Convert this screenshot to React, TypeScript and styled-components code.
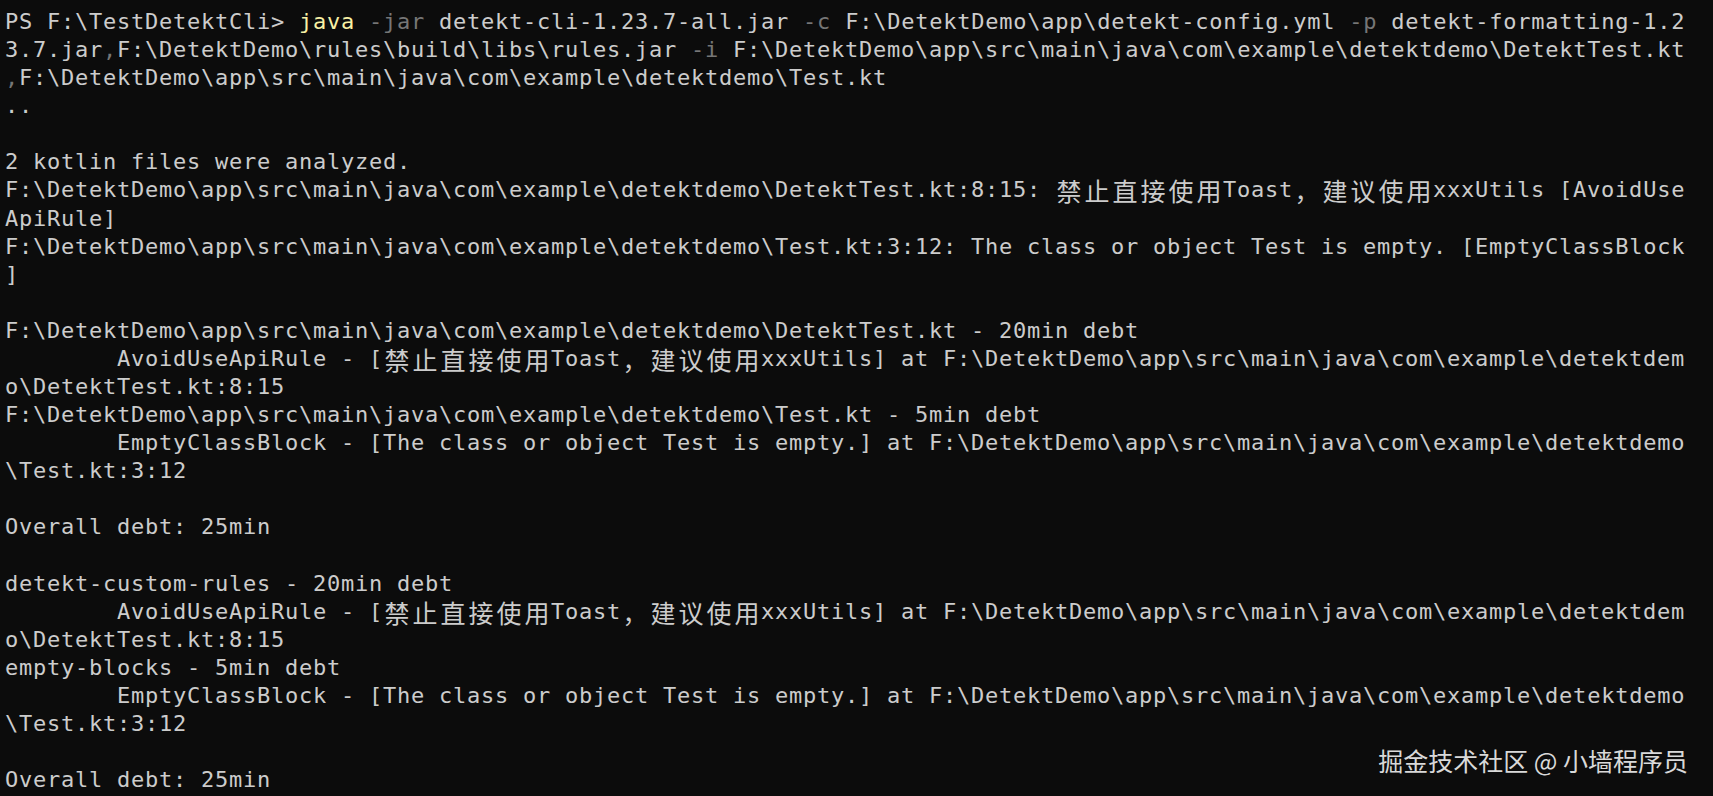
import React from "react";
import styled, { createGlobalStyle } from "styled-components";

const GlobalStyle = createGlobalStyle`
  html, body {
    margin: 0;
    padding: 0;
    background: #0c0c0c;
  }
  #root {
    width: 100%;
  }
`;

const Screen = styled.div`
  position: relative;
  width: 1713px;
  height: 796px;
  overflow: hidden;
  background: #0c0c0c;
  box-sizing: border-box;
  padding: 8px 0 0 5px;
`;

const Output = styled.div`
  display: flex;
  flex-direction: column;
  font-family: "DejaVu Sans Mono", "Liberation Mono", monospace;
  font-size: 22px;
  letter-spacing: 0.756px;
  color: #cccccc;
`;

const Line = styled.div`
  height: 28.08px;
  line-height: 28px;
  white-space: pre;
`;

const Token = styled.span<{ $tone?: "cmd" | "dim" }>`
  color: ${(p) =>
    p.$tone === "cmd" ? "#f9f1a5" : p.$tone === "dim" ? "#767676" : "#cccccc"};
`;

const Wide = styled.span`
  display: inline-block;
  width: 28px;
  text-align: center;
  letter-spacing: 0;
  font-family: "Noto Sans CJK SC", "Noto Sans CJK JP", sans-serif;
  font-size: 25px;
  line-height: 28px;
  vertical-align: top;
`;

const Watermark = styled.div`
  position: absolute;
  right: 25px;
  bottom: 23px;
  font-family: "Noto Sans CJK SC", "Noto Sans", sans-serif;
  font-size: 25px;
  line-height: 25px;
  color: #d9d9d9;
  white-space: pre;
`;

type Seg = [string, ("cmd" | "dim")?];

const P = "F:\\DetektDemo\\app\\src\\main\\java\\com\\example\\detektdemo\\";
const W = "F:\\DetektDemo\\app\\src\\main\\java\\com\\example\\";
const T = "        ";

const lines: Seg[][] = [
  [
    ["PS F:\\TestDetektCli> "],
    ["java", "cmd"],
    [" "],
    ["-jar", "dim"],
    [" detekt-cli-1.23.7-all.jar "],
    ["-c", "dim"],
    [" F:\\DetektDemo\\app\\detekt-config.yml "],
    ["-p", "dim"],
    [" detekt-formatting-1.2"],
  ],
  [
    ["3.7.jar"],
    [",", "dim"],
    ["F:\\DetektDemo\\rules\\build\\libs\\rules.jar "],
    ["-i", "dim"],
    [" " + P + "DetektTest.kt"],
  ],
  [[",", "dim"], [P + "Test.kt"]],
  [[".."]],
  [[""]],
  [["2 kotlin files were analyzed."]],
  [[P + "DetektTest.kt:8:15: 禁止直接使用Toast，建议使用xxxUtils [AvoidUse"]],
  [["ApiRule]"]],
  [[P + "Test.kt:3:12: The class or object Test is empty. [EmptyClassBlock"]],
  [["]"]],
  [[""]],
  [[P + "DetektTest.kt - 20min debt"]],
  [[T + "AvoidUseApiRule - [禁止直接使用Toast，建议使用xxxUtils] at " + W + "detektdem"]],
  [["o\\DetektTest.kt:8:15"]],
  [[P + "Test.kt - 5min debt"]],
  [[T + "EmptyClassBlock - [The class or object Test is empty.] at " + W + "detektdemo"]],
  [["\\Test.kt:3:12"]],
  [[""]],
  [["Overall debt: 25min"]],
  [[""]],
  [["detekt-custom-rules - 20min debt"]],
  [[T + "AvoidUseApiRule - [禁止直接使用Toast，建议使用xxxUtils] at " + W + "detektdem"]],
  [["o\\DetektTest.kt:8:15"]],
  [["empty-blocks - 5min debt"]],
  [[T + "EmptyClassBlock - [The class or object Test is empty.] at " + W + "detektdemo"]],
  [["\\Test.kt:3:12"]],
  [[""]],
  [["Overall debt: 25min"]],
];

const CJK = /([\u2E80-\u9FFF\uFF00-\uFFEF]+)/;

function renderText(text: string) {
  return text.split(CJK).map((part, i) => {
    if (i % 2 === 1) {
      return Array.from(part).map((ch, j) => <Wide key={`${i}-${j}`}>{ch}</Wide>);
    }
    return part;
  });
}

export default function App() {
  return (
    <>
      <GlobalStyle />
      <Screen>
        <Output>
          {lines.map((segs, i) => (
            <Line key={i}>
              {segs.map(([text, tone], j) => (
                <Token key={j} $tone={tone}>
                  {renderText(text)}
                </Token>
              ))}
            </Line>
          ))}
        </Output>
        <Watermark>掘金技术社区 @ 小墙程序员</Watermark>
      </Screen>
    </>
  );
}
